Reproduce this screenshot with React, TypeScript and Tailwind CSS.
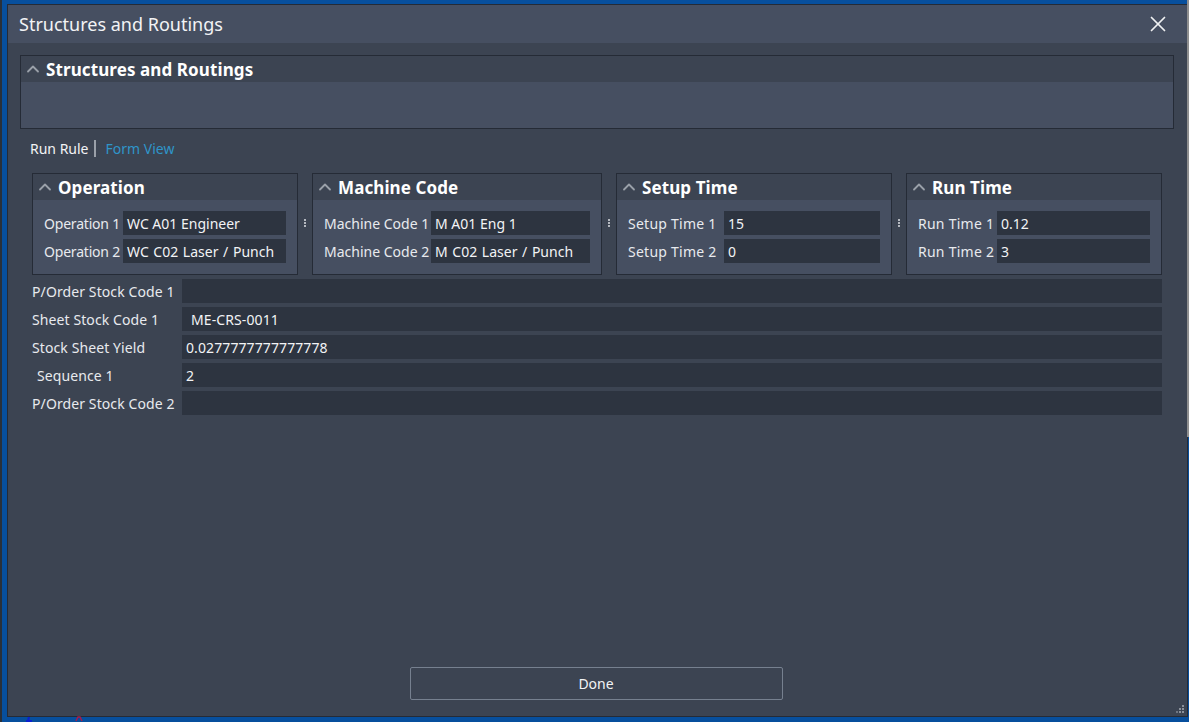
import React from 'react';
import { ChevronUp, X } from 'lucide-react';

const font = { fontFamily: '"Noto Sans", "Open Sans", sans-serif' };

interface PanelField {
  label: string;
  value: string;
  valueClass?: string;
}

interface PanelProps {
  title: string;
  width: string;
  labelClass?: string;
  fields: PanelField[];
}

const SectionHeader = ({ title }: { title: string }) => (
  <div className="flex h-[26px] items-center bg-[#3c4452] pl-[2px]">
    <ChevronUp className="size-[20px] text-[#9aa0a9]" strokeWidth={2.2} />
    <span className="ml-[3px] text-[17px] font-bold leading-none tracking-[0.1px] text-white">{title}</span>
  </div>
);

const Panel: React.FC<PanelProps> = ({ title, width, labelClass, fields }) => (
  <div className={`${width} h-[102px] shrink-0 border border-[#252b36] bg-[#464f61]`}>
    <SectionHeader title={title} />
    <div className="flex flex-col gap-1 pt-[11px] pl-[11px] pr-[11px]">
      {fields.map((f) => (
        <div key={f.label} className="flex h-6 items-center">
          <span className={`flex-1 whitespace-nowrap text-[14px] text-[#e8eaee] ${labelClass ?? ''}`}>{f.label}</span>
          <div className={`flex h-6 w-[var(--w)] items-center whitespace-pre bg-[#2d3440] pl-1 text-[14px] text-[#f2f3f5] ${f.valueClass ?? ''}`}>
            {f.value}
          </div>
        </div>
      ))}
    </div>
  </div>
);

const Splitter = () => (
  <div className="flex w-[14px] shrink-0 flex-col items-center gap-px pt-[46px]">
    <span className="size-[2px] bg-[#b4b8bf]" />
    <span className="size-[2px] bg-[#b4b8bf]" />
    <span className="size-[2px] bg-[#b4b8bf]" />
  </div>
);

const rows = [
  { label: 'P/Order Stock Code 1', value: '' },
  { label: 'Sheet Stock Code 1', value: 'ME-CRS-0011', indent: 'pl-[9px]' },
  { label: 'Stock Sheet Yield', value: '0.0277777777777778' },
  { label: 'Sequence 1', value: '2', labelIndent: 'pl-[5px]' },
  { label: 'P/Order Stock Code 2', value: '' },
];

export default function App() {
  return (
    <div style={font} className="relative flex h-[722px] w-[1189px] overflow-hidden bg-[#074f9d]">
      {/* desktop edges behind the dialog */}
      <div className="w-[2px] shrink-0 bg-[#2a3038]" />
      <div className="w-[5px] shrink-0" />
      <div className="mt-[4px] mb-[5px] flex h-[713px] w-[1181px] flex-col border border-[#252b36] bg-[#3c4452]">
        {/* title bar */}
        <div className="flex h-[38px] shrink-0 items-center justify-between bg-[#464f61] pl-[11px] pr-[16px]">
          <span className="text-[18px] leading-none text-[#f2f3f5]">Structures and Routings</span>
          <X className="size-[26px] text-[#f0f1f3]" strokeWidth={1.6} />
        </div>

        <div className="flex flex-1 flex-col px-3 pt-3">
          {/* top section */}
          <div className="h-[74px] w-[1154px] shrink-0 border border-[#252b36] bg-[#464f61]">
            <SectionHeader title="Structures and Routings" />
          </div>

          {/* tabs */}
          <div className="flex h-[44px] shrink-0 items-center pl-[10px] pb-[6px] text-[14px]">
            <span className="text-[#f2f3f5]">Run Rule</span>
            <span className="ml-[5px] h-[17px] w-[2px] bg-[#9aa0a9]" />
            <span className="ml-[10px] text-[#2f95c9]">Form View</span>
          </div>

          <div className="flex w-[1154px] flex-col pl-3">
            <div className="flex">
              <div style={{ '--w': '163px' } as React.CSSProperties}>
                <Panel
                  title="Operation"
                  width="w-[266px]"
                  labelClass="tracking-[-0.2px]"
                  fields={[
                    { label: 'Operation 1', value: 'WC A01 Engineer' },
                    { label: 'Operation 2', value: 'WC C02 Laser / Punch', valueClass: '[word-spacing:1px]' },
                  ]}
                />
              </div>
              <Splitter />
              <div style={{ '--w': '159px' } as React.CSSProperties}>
                <Panel
                  title="Machine Code"
                  width="w-[290px]"
                  fields={[
                    { label: 'Machine Code 1', value: 'M A01 Eng 1' },
                    { label: 'Machine Code 2', value: 'M C02 Laser / Punch', valueClass: '[word-spacing:1px]' },
                  ]}
                />
              </div>
              <Splitter />
              <div style={{ '--w': '156px' } as React.CSSProperties}>
                <Panel
                  title="Setup Time"
                  width="w-[276px]"
                  labelClass="tracking-[0.25px]"
                  fields={[
                    { label: 'Setup Time 1', value: '15' },
                    { label: 'Setup Time 2', value: '0' },
                  ]}
                />
              </div>
              <Splitter />
              <div style={{ '--w': '153px' } as React.CSSProperties}>
                <Panel
                  title="Run Time"
                  width="w-[256px]"
                  labelClass="tracking-[0.25px]"
                  fields={[
                    { label: 'Run Time 1', value: '0.12' },
                    { label: 'Run Time 2', value: '3' },
                  ]}
                />
              </div>
            </div>

            <div className="mt-1 flex flex-col gap-1">
              {rows.map((r) => (
                <div key={r.label} className="flex h-6 items-center">
                  <span className={`w-[150px] shrink-0 whitespace-nowrap text-[14px] tracking-[0.1px] text-[#e8eaee] ${r.labelIndent ?? ''}`}>
                    {r.label}
                  </span>
                  <div className={`flex h-6 w-[980px] items-center bg-[#2d3440] text-[14px] tracking-[0.1px] text-[#f2f3f5] ${r.indent ?? 'pl-1'}`}>
                    {r.value}
                  </div>
                </div>
              ))}
            </div>
          </div>

          <div className="mt-auto mb-4 flex justify-center pr-[3px]">
            <button className="h-[33px] w-[373px] rounded-[2px] border border-[#76808f] text-[14px] text-[#f2f3f5]">
              Done
            </button>
          </div>
        </div>
      </div>

      {/* resize grip */}
      <svg className="absolute left-[1176px] top-[705px]" width="10" height="10" viewBox="0 0 10 10">
        <rect x="6" y="0" width="2" height="2" fill="#8b919b" />
        <rect x="3" y="3" width="2" height="2" fill="#8b919b" />
        <rect x="6" y="3" width="2" height="2" fill="#8b919b" />
        <rect x="0" y="6" width="2" height="2" fill="#6f7682" />
        <rect x="3" y="6" width="2" height="2" fill="#8b919b" />
        <rect x="6" y="6" width="2" height="2" fill="#8b919b" />
      </svg>
      {/* bits of the window behind */}
      <div className="absolute right-0 top-0 h-[437px] w-[2px] bg-[#8f8f8f]" />
      <svg className="absolute left-[25px] top-[715px]" width="60" height="7" viewBox="0 0 60 7">
        <path d="M1 6h6M3 6l1-4" stroke="#0a1fd0" strokeWidth="2" fill="none" />
        <path d="M51 6l2-4h2l2 4" stroke="#a81c4a" strokeWidth="1.5" fill="none" />
      </svg>
    </div>
  );
}
